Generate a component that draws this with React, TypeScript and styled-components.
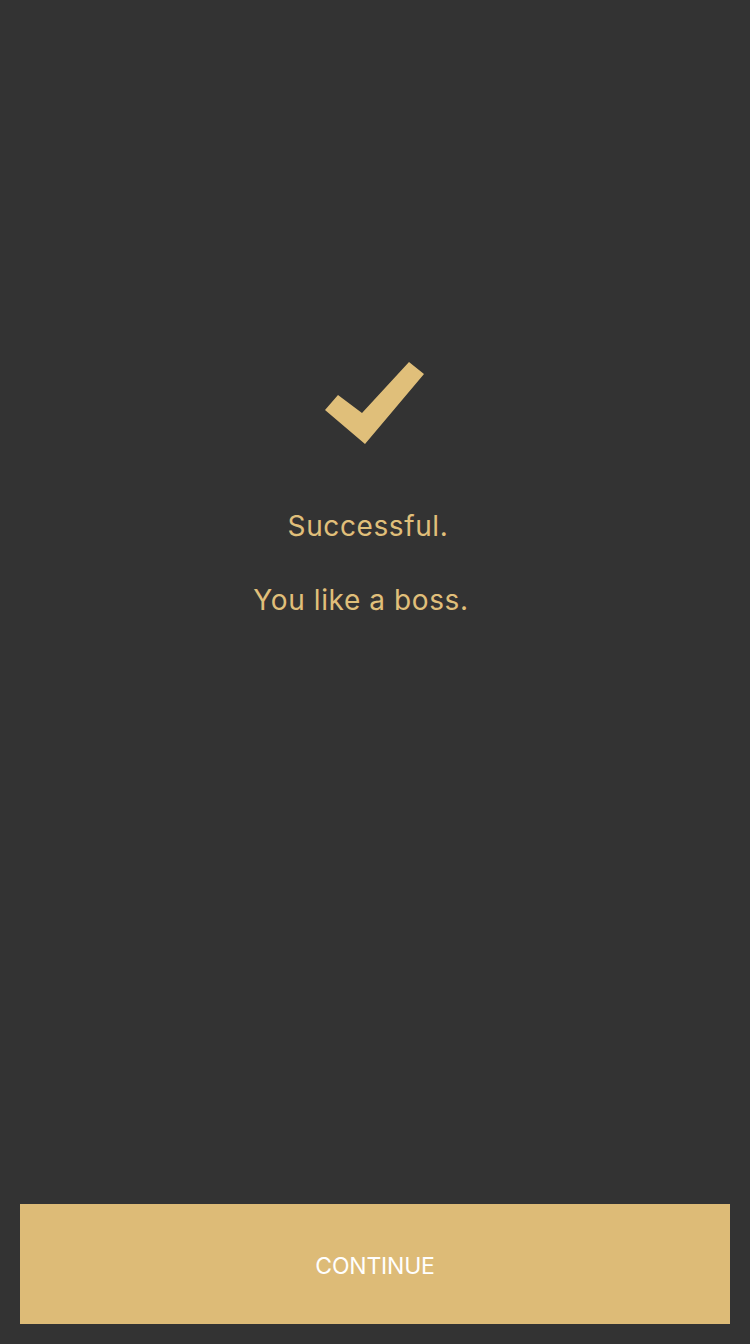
import React from "react";
import styled, { createGlobalStyle } from "styled-components";

const Global = createGlobalStyle`
  html, body { margin: 0; padding: 0; background: #333333; }
  body { font-family: Inter, "Noto Sans", sans-serif; }
`;

const Screen = styled.div`
  width: 750px;
  height: 1344px;
  background: #333333;
  display: flex;
  flex-direction: column;
  box-sizing: border-box;
  padding: 0 20px 20px;
`;

const Content = styled.div`
  flex: 1;
  display: flex;
  flex-direction: column;
  align-items: center;
  padding-top: 360px;
`;

const Check = styled.svg`
  width: 100px;
  height: 84px;
  display: block;
`;

const Message = styled.p<{ $gap: number; $shift: number }>`
  margin: ${(p) => p.$gap}px 0 0;
  color: #e0bf7a;
  font-size: 28px;
  line-height: 34px;
  letter-spacing: 0.6px;
  font-weight: 400;
  transform: translateX(${(p) => p.$shift}px);
`;

const Button = styled.button`
  height: 120px;
  width: 100%;
  border: none;
  background: #ddbb77;
  color: #ffffff;
  font-family: Inter, "Noto Sans", sans-serif;
  font-size: 23px;
  letter-spacing: -0.2px;
  padding: 4px 0 0;
  cursor: pointer;
`;

export default function App() {
  return (
    <>
      <Global />
      <Screen>
        <Content>
          <Check viewBox="325 360 100 84">
            <polygon
              points="325,410 338,395 362,413 409,362 424,374 365,444"
              fill="#e0bf7a"
            />
          </Check>
          <Message $gap={65} $shift={-7}>Successful.</Message>
          <Message $gap={40} $shift={-14}>You like a boss.</Message>
        </Content>
        <Button>CONTINUE</Button>
      </Screen>
    </>
  );
}
